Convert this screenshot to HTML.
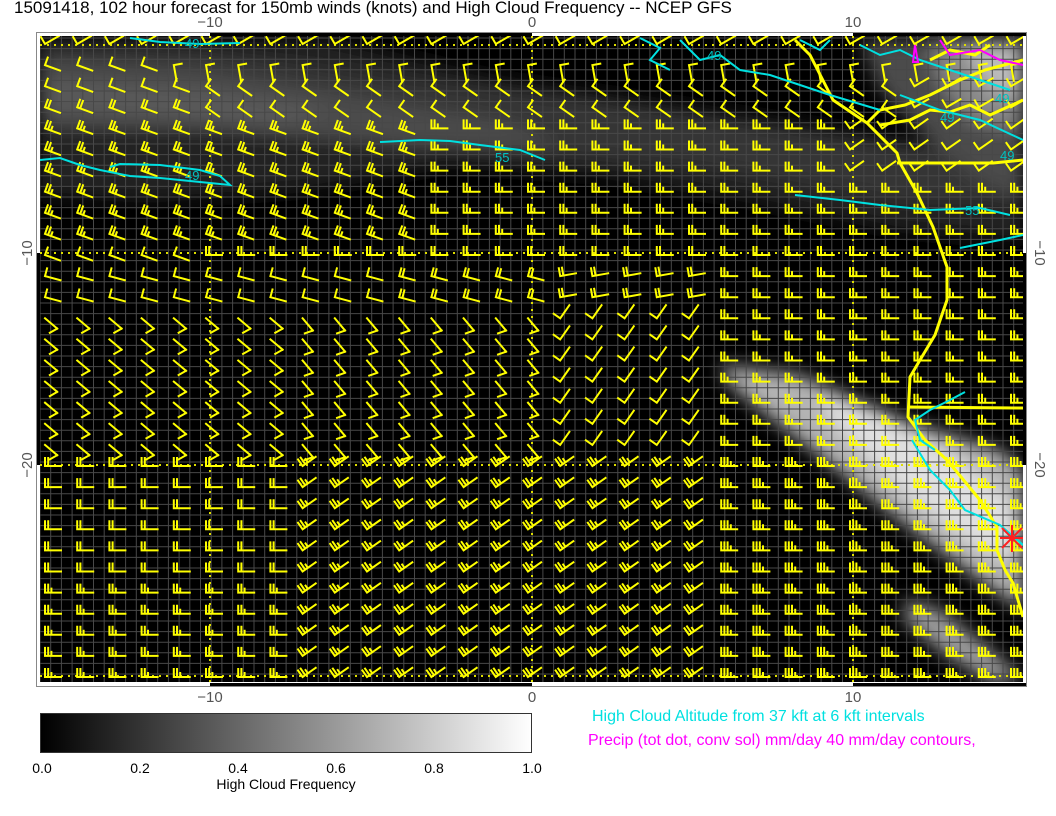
<!DOCTYPE html>
<html><head><meta charset="utf-8"><style>
html,body{margin:0;padding:0;background:#fff;width:1056px;height:816px;overflow:hidden}
svg{display:block}
text{font-family:"Liberation Sans",sans-serif}
</style></head><body>
<svg id="s" width="1056" height="816" xmlns="http://www.w3.org/2000/svg">
<defs>
<filter id="b" x="-20%" y="-20%" width="140%" height="140%"><feGaussianBlur stdDeviation="9"/></filter>
<linearGradient id="cb" x1="0" x2="1"><stop offset="0" stop-color="#000"/><stop offset="1" stop-color="#fff"/></linearGradient>
<clipPath id="pc"><rect x="40" y="36" width="983" height="646"/></clipPath>
</defs>
<text x="14" y="13" font-size="17" fill="#000">15091418, 102 hour forecast for 150mb winds (knots) and High Cloud Frequency -- NCEP GFS</text>
<g font-size="15" fill="#555" text-anchor="middle">
<text x="210" y="27">−10</text><text x="532" y="27">0</text><text x="853" y="27">10</text>
<text x="210" y="702">−10</text><text x="532" y="702">0</text><text x="853" y="702">10</text>
<text transform="translate(32,253) rotate(-90)">−10</text><text transform="translate(32,465) rotate(-90)">−20</text>
<text transform="translate(1035,253) rotate(90)">−10</text><text transform="translate(1035,465) rotate(90)">−20</text>
</g>
<rect x="36.5" y="32.5" width="990" height="654" fill="#fff" stroke="#888"/>
<g clip-path="url(#pc)">
<rect x="40" y="36" width="983" height="646" fill="#000"/>
<g filter="url(#b)">
<polygon points="40,40 330,40 500,80 700,110 900,140 1023,150 1023,240 900,230 750,200 600,175 450,165 300,190 150,200 40,195" fill="#222"/>
<polygon points="40,45 200,50 400,80 600,100 800,130 1000,160 1023,200 900,200 700,165 500,150 350,140 200,130 40,130" fill="#363636"/>
<polygon points="40,60 200,70 380,100 520,125 560,150 400,145 250,130 40,125" fill="#4c4c4c"/>
<polygon points="40,80 200,90 330,110 280,125 150,115 40,110" fill="#5a5a5a"/>
<polygon points="860,40 1023,40 1023,200 980,180 930,140 880,90" fill="#4c4c4c"/>
<polygon points="930,40 1023,40 1023,130 970,120 940,80" fill="#888"/>
<polygon points="960,45 1023,45 1023,100 990,90" fill="#bbb"/>
<polygon points="720,365 800,375 900,420 1000,450 1023,470 1023,610 980,580 900,520 800,440 730,385" fill="#b4b4b4"/>
<polygon points="820,395 880,410 960,460 1010,500 1023,560 980,550 900,490 830,420" fill="#e0e0e0"/>
<polygon points="905,600 940,610 990,650 1023,680 990,682 940,650 905,620" fill="#a0a0a0"/>
</g>
<g id="grid" stroke="#484848" stroke-width="1"></g>
<g stroke="#dddd00" stroke-width="2" stroke-dasharray="2 5" fill="none">
<line x1="210" y1="36" x2="210" y2="682"/><line x1="532" y1="36" x2="532" y2="682"/><line x1="853" y1="36" x2="853" y2="682"/>
<line x1="40" y1="45" x2="1023" y2="45"/><line x1="40" y1="253" x2="1023" y2="253"/><line x1="40" y1="465" x2="1023" y2="465"/><line x1="40" y1="676" x2="1023" y2="676"/>
</g>
<g id="barbs" stroke="#ffff00" stroke-width="2" fill="none" stroke-linecap="square"></g>
<g stroke="#ffff00" stroke-width="3" fill="none" stroke-linejoin="round">
<path d="M795,40 L810,55 833,100 867,123 897,153 900,163 917,193 933,227 947,267 947,300 935,335 920,360 910,377 908,417 925,440 947,460 980,500 997,527 997,550 1005,570 1013,583 1023,617"/>
<path d="M897,163 L993,163 1023,160"/>
<path d="M880,125 L910,120 930,110 950,112 970,105 990,115 1023,100"/>
<path d="M867,123 L880,110 905,105 930,95 960,80 985,70 1023,60"/>
<path d="M908,407 L1023,408"/>
<path d="M930,60 L950,50 975,55 990,45"/>
</g>
<g stroke="#00e0e0" stroke-width="2" fill="none">
<path d="M40,160 L60,158 80,165 100,170 130,176 160,178 200,182 230,185 220,176 200,170 160,165 120,164 110,167"/>
<path d="M130,38 L160,42 200,44 240,43"/>
<path d="M380,142 L420,140 450,141 480,145 520,150 545,160"/>
<path d="M680,40 L700,60 720,55 740,70 770,75 800,85 830,95 880,110"/>
<path d="M640,38 L660,48 650,60 670,70"/>
<path d="M800,40 L820,50 830,40"/>
<path d="M860,45 L880,55 900,50 920,60 950,70 980,80 1010,90"/>
<path d="M900,95 L940,110 980,120 1023,140"/>
<path d="M960,248 L1000,240 1023,235"/>
<path d="M795,195 L840,200 880,205 930,210 980,208 1010,215"/>
<path d="M935,450 L920,440 915,420 930,410 950,400 965,392"/>
<path d="M912,440 L930,470 950,490 965,510 1000,525 1023,545"/>
</g>
<g stroke="#ff00ff" stroke-width="2" fill="none">
<path d="M940,40 L950,55 980,50 1000,60 1023,65"/><path d="M915,45 L918,62 913,62 Z"/>
</g>
<g font-size="13" fill="#00c0c0">
<text x="185" y="48">49</text><text x="185" y="180">49</text><text x="495" y="162">55</text><text x="707" y="60">49</text><text x="995" y="103">49</text><text x="1000" y="160">49</text><text x="965" y="215">55</text><text x="940" y="122">49</text>
</g>
<g stroke="#ff2020" stroke-width="2"><line x1="1000" y1="538" x2="1023" y2="538"/><line x1="1012" y1="525" x2="1012" y2="552"/><line x1="1002" y1="528" x2="1022" y2="548"/><line x1="1022" y1="528" x2="1002" y2="548"/></g>
</g>
<g fill="#000">
<rect x="210" y="33" width="322" height="3"/><rect x="853" y="33" width="173" height="3"/>
<rect x="210" y="683" width="322" height="3"/><rect x="853" y="683" width="173" height="3"/>
<rect x="37" y="253" width="3" height="212"/><rect x="1023" y="253" width="3" height="212"/>
</g>
<rect x="40.5" y="713.5" width="491" height="39" fill="url(#cb)" stroke="#333"/>
<g font-size="14" fill="#000" text-anchor="middle">
<text x="42" y="773">0.0</text><text x="140" y="773">0.2</text><text x="238" y="773">0.4</text><text x="336" y="773">0.6</text><text x="434" y="773">0.8</text><text x="532" y="773">1.0</text>
<text x="286" y="789">High Cloud Frequency</text>
</g>
<text x="592" y="721" font-size="16" fill="#00e0e0">High Cloud Altitude from 37 kft at 6 kft intervals</text>
<text x="588" y="745" font-size="16" fill="#ff00ff">Precip (tot dot, conv sol) mm/day 40 mm/day contours,</text>
</svg>
<script>
var g=document.getElementById("grid"),h="";
for(var x=40;x<1023;x+=10.7)h+='<line x1="'+x+'" y1="36" x2="'+x+'" y2="682"/>';
for(var y=38;y<682;y+=10.6)h+='<line x1="40" y1="'+y+'" x2="1023" y2="'+y+'"/>';
g.innerHTML=h;
var b=document.getElementById("barbs"),s="";
for(var r=0;r<31;r++){for(var c=0;c<31;c++){
var tx0=45+c*32.2,y=44+r*21.1,a=0,n=2,x=tx0+7,far=false;
if(r==0){a=-30;n=1;}
else if(r==1){a=x<150?20:80;n=1;}
else if(r<=3){a=x<200?20:35;n=x<200?(r==2?1:2):1;if(x>900)a=-30;}
else if(r<=9){a=x<420?20:0;n=3;if(x>850&&r<7){a=-35;n=1;}}
else if(r==10){a=x<200?20:0;n=x<200?1:2;}
else if(r<=12){a=x<540?15:-10;n=x<400?1:2;if(x>700){a=0;n=3;}}
else if(r<=19){ if(x<300){a=40;n=1;far=true;} else if(x<540){a=50;n=1;far=true;} else if(x<700){a=-55;n=1;} else {a=0;n=3;} }
else { if(x<300){a=0;n=r>25?3:2;} else if(x<700){a=-35;n=3;} else {a=0;n=4;} }
var t='<g transform="rotate('+a+' '+tx0+' '+y+')"><path d="M'+tx0+' '+y+'H'+(tx0+16);
if(far){t+='M'+(tx0+16)+' '+y+'l-3 8';}
else for(var i=0;i<n;i++){var tx=tx0+i*3.2;t+='M'+tx+' '+y+'v'+(i==n-1&&n>2?-4:-8);}
t+='"/></g>';s+=t;}}
b.innerHTML=s;
</script>
</body></html>
